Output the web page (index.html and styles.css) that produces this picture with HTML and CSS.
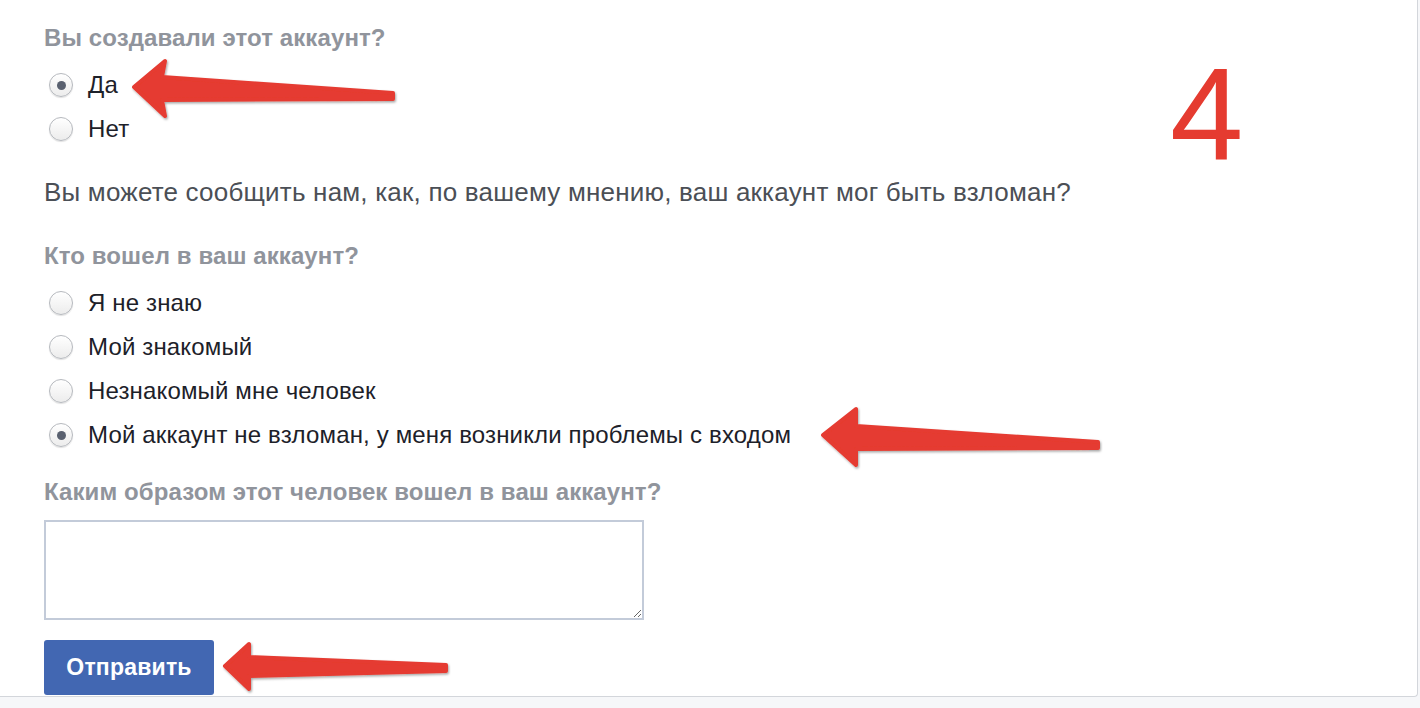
FILE: index.html
```html
<!DOCTYPE html>
<html lang="ru">
<head>
<meta charset="utf-8">
<title>Аккаунт</title>
<link rel="stylesheet" href="styles.css">
</head>
<body>
<div class="card">
  <form class="form">
    <h3 class="label">Вы создавали этот аккаунт?</h3>
    <div class="options">
      <label class="option"><span class="radio checked"></span><span>Да</span></label>
      <label class="option"><span class="radio"></span><span>Нет</span></label>
    </div>
    <p class="question">Вы можете сообщить нам, как, по вашему мнению, ваш аккаунт мог быть взломан?</p>
    <h3 class="label label-2">Кто вошел в ваш аккаунт?</h3>
    <div class="options">
      <label class="option"><span class="radio"></span><span>Я не знаю</span></label>
      <label class="option"><span class="radio"></span><span>Мой знакомый</span></label>
      <label class="option"><span class="radio"></span><span>Незнакомый мне человек</span></label>
      <label class="option"><span class="radio checked"></span><span>Мой аккаунт не взломан, у меня возникли проблемы с входом</span></label>
    </div>
    <h3 class="label label-3">Каким образом этот человек вошел в ваш аккаунт?</h3>
    <textarea class="textarea"></textarea>
    <button type="button" class="submit">Отправить</button>
  </form>

  <div class="step">4</div>
  <svg class="annotations" width="1418" height="697" viewBox="0 0 1418 697">
    <defs>
      <filter id="sh" x="-10%" y="-30%" width="120%" height="160%">
        <feDropShadow dx="1" dy="1.5" stdDeviation="1" flood-color="#000" flood-opacity="0.35"/>
      </filter>
    </defs>
    <g fill="#e53b30" stroke="#e53b30" stroke-width="4" stroke-linejoin="round" filter="url(#sh)">
      <polygon points="134,87 165,61 162,77 393,93 393,99 162,100 165,116"/>
      <polygon points="823,435 856,409 856,426 1098,442 1098,448 856,449 856,465"/>
      <polygon points="225,666 249,644 249,657 446,665 446,671 249,676 249,689"/>
    </g>
  </svg>
</div>
</body>
</html>
```
FILE: styles.css
```css
* { box-sizing: border-box; }

html, body {
  margin: 0;
  padding: 0;
}

body {
  background: #f6f7f9;
  font-family: "Liberation Sans", Arial, Helvetica, sans-serif;
  color: #1d2129;
  height: 708px;
  overflow: hidden;
}

.card {
  position: relative;
  width: 1418px;
  background: #ffffff;
  border-right: 1px solid #d3d6db;
  border-bottom: 1px solid #d3d6db;
  border-bottom-right-radius: 4px;
  padding: 26px 0 1px 44px;
}

.form {
  display: flex;
  flex-direction: column;
  align-items: flex-start;
}

.label {
  margin: 0;
  font-size: 24px;
  line-height: 24px;
  font-weight: bold;
  letter-spacing: 0.1px;
  color: #90949c;
}

.label-2 { margin-top: 38px; }
.label-3 { margin-top: 23px; }

.options {
  display: flex;
  flex-direction: column;
  margin-top: 13px;
}

.option {
  display: flex;
  align-items: center;
  height: 44px;
  font-size: 24px;
  letter-spacing: 0.15px;
  color: #1d2129;
}

.radio {
  flex: none;
  width: 24px;
  height: 24px;
  margin-left: 5px;
  margin-right: 15px;
  border-radius: 50%;
  border: 1px solid #b6b9be;
  background: linear-gradient(#ffffff, #ececec);
  box-shadow: 0 1px 1px rgba(0, 0, 0, 0.12);
  display: flex;
  align-items: center;
  justify-content: center;
}

.radio.checked::after {
  content: "";
  width: 9px;
  height: 9px;
  border-radius: 50%;
  background: #5a6170;
}

.question {
  margin: 27px 0 0;
  font-size: 26px;
  line-height: 28px;
  letter-spacing: 0.2px;
  color: #4b4f56;
}

.textarea {
  margin-top: 16px;
  width: 600px;
  height: 100px;
  border: 2px solid #c3cbd9;
  border-radius: 0;
  background: #fff;
  resize: both;
  padding: 4px;
  font-family: inherit;
}

.submit {
  margin-top: 20px;
  width: 170px;
  height: 55px;
  border: none;
  border-radius: 3px;
  background: #4267b2;
  color: #ffffff;
  font-family: "Liberation Sans", Arial, sans-serif;
  font-size: 23px;
  font-weight: bold;
  letter-spacing: 0.2px;
  padding: 0;
}

.step {
  position: absolute;
  left: 1170px;
  top: 49px;
  font-family: "Liberation Sans", Arial, sans-serif;
  font-size: 132px;
  line-height: 1;
  color: #e53b30;
}

.annotations {
  position: absolute;
  left: 0;
  top: 0;
  pointer-events: none;
}
```
